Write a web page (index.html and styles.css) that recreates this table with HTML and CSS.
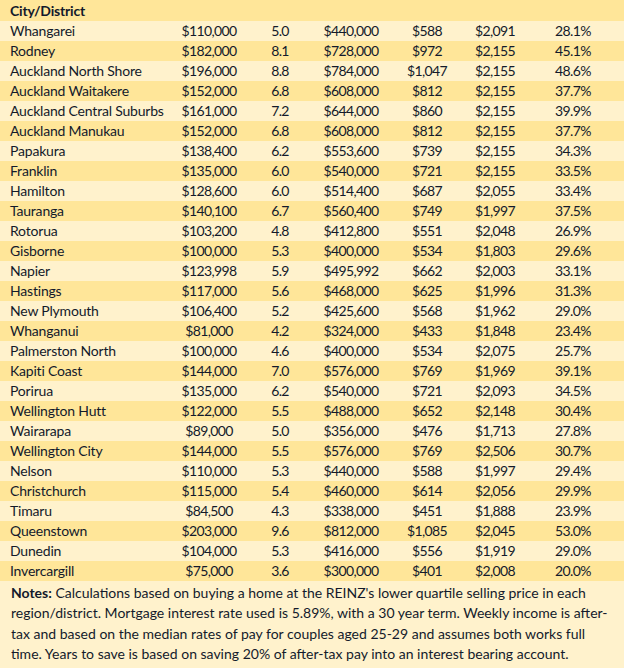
FILE: index.html
```html
<!DOCTYPE html>
<html>
<head>
<meta charset="utf-8">
<link rel="stylesheet" href="styles.css">
</head>
<body>
<table class="data">
<colgroup>
<col class="c1"><col class="c2"><col class="c3"><col class="c4"><col class="c5"><col class="c6"><col class="c7">
</colgroup>
<thead>
<tr class="head"><th>City/District</th><th></th><th></th><th></th><th></th><th></th><th></th></tr>
</thead>
<tbody>
<tr><td>Whangarei</td><td>$110,000</td><td>5.0</td><td>$440,000</td><td>$588</td><td>$2,091</td><td>28.1%</td></tr>
<tr><td>Rodney</td><td>$182,000</td><td>8.1</td><td>$728,000</td><td>$972</td><td>$2,155</td><td>45.1%</td></tr>
<tr><td>Auckland North Shore</td><td>$196,000</td><td>8.8</td><td>$784,000</td><td>$1,047</td><td>$2,155</td><td>48.6%</td></tr>
<tr><td>Auckland Waitakere</td><td>$152,000</td><td>6.8</td><td>$608,000</td><td>$812</td><td>$2,155</td><td>37.7%</td></tr>
<tr><td>Auckland Central Suburbs</td><td>$161,000</td><td>7.2</td><td>$644,000</td><td>$860</td><td>$2,155</td><td>39.9%</td></tr>
<tr><td>Auckland Manukau</td><td>$152,000</td><td>6.8</td><td>$608,000</td><td>$812</td><td>$2,155</td><td>37.7%</td></tr>
<tr><td>Papakura</td><td>$138,400</td><td>6.2</td><td>$553,600</td><td>$739</td><td>$2,155</td><td>34.3%</td></tr>
<tr><td>Franklin</td><td>$135,000</td><td>6.0</td><td>$540,000</td><td>$721</td><td>$2,155</td><td>33.5%</td></tr>
<tr><td>Hamilton</td><td>$128,600</td><td>6.0</td><td>$514,400</td><td>$687</td><td>$2,055</td><td>33.4%</td></tr>
<tr><td>Tauranga</td><td>$140,100</td><td>6.7</td><td>$560,400</td><td>$749</td><td>$1,997</td><td>37.5%</td></tr>
<tr><td>Rotorua</td><td>$103,200</td><td>4.8</td><td>$412,800</td><td>$551</td><td>$2,048</td><td>26.9%</td></tr>
<tr><td>Gisborne</td><td>$100,000</td><td>5.3</td><td>$400,000</td><td>$534</td><td>$1,803</td><td>29.6%</td></tr>
<tr><td>Napier</td><td>$123,998</td><td>5.9</td><td>$495,992</td><td>$662</td><td>$2,003</td><td>33.1%</td></tr>
<tr><td>Hastings</td><td>$117,000</td><td>5.6</td><td>$468,000</td><td>$625</td><td>$1,996</td><td>31.3%</td></tr>
<tr><td>New Plymouth</td><td>$106,400</td><td>5.2</td><td>$425,600</td><td>$568</td><td>$1,962</td><td>29.0%</td></tr>
<tr><td>Whanganui</td><td>$81,000</td><td>4.2</td><td>$324,000</td><td>$433</td><td>$1,848</td><td>23.4%</td></tr>
<tr><td>Palmerston North</td><td>$100,000</td><td>4.6</td><td>$400,000</td><td>$534</td><td>$2,075</td><td>25.7%</td></tr>
<tr><td>Kapiti Coast</td><td>$144,000</td><td>7.0</td><td>$576,000</td><td>$769</td><td>$1,969</td><td>39.1%</td></tr>
<tr><td>Porirua</td><td>$135,000</td><td>6.2</td><td>$540,000</td><td>$721</td><td>$2,093</td><td>34.5%</td></tr>
<tr><td>Wellington Hutt</td><td>$122,000</td><td>5.5</td><td>$488,000</td><td>$652</td><td>$2,148</td><td>30.4%</td></tr>
<tr><td>Wairarapa</td><td>$89,000</td><td>5.0</td><td>$356,000</td><td>$476</td><td>$1,713</td><td>27.8%</td></tr>
<tr><td>Wellington City</td><td>$144,000</td><td>5.5</td><td>$576,000</td><td>$769</td><td>$2,506</td><td>30.7%</td></tr>
<tr><td>Nelson</td><td>$110,000</td><td>5.3</td><td>$440,000</td><td>$588</td><td>$1,997</td><td>29.4%</td></tr>
<tr><td>Christchurch</td><td>$115,000</td><td>5.4</td><td>$460,000</td><td>$614</td><td>$2,056</td><td>29.9%</td></tr>
<tr><td>Timaru</td><td>$84,500</td><td>4.3</td><td>$338,000</td><td>$451</td><td>$1,888</td><td>23.9%</td></tr>
<tr><td>Queenstown</td><td>$203,000</td><td>9.6</td><td>$812,000</td><td>$1,085</td><td>$2,045</td><td>53.0%</td></tr>
<tr><td>Dunedin</td><td>$104,000</td><td>5.3</td><td>$416,000</td><td>$556</td><td>$1,919</td><td>29.0%</td></tr>
<tr><td>Invercargill</td><td>$75,000</td><td>3.6</td><td>$300,000</td><td>$401</td><td>$2,008</td><td>20.0%</td></tr>
</tbody>
</table>
<p class="notes"><b>Notes:</b> Calculations based on buying a home at the REINZ's lower quartile selling price in each region/district. Mortgage interest rate used is 5.89%, with a 30 year term. Weekly income is after-tax and based on the median rates of pay for couples aged 25-29 and assumes both works full time. Years to save is based on saving 20% of after-tax pay into an interest bearing account.</p>
</body>
</html>
```

FILE: styles.css
```css
html, body {
  margin: 0;
  padding: 0;
  background: #fff2cc;
}
body {
  width: 624px;
  height: 668px;
  overflow: hidden;
  font-family: Lato, "Liberation Sans", sans-serif;
  font-size: 14px;
  color: #131a2b;
}
.data {
  width: 624px;
  border-collapse: collapse;
  table-layout: fixed;
}
.c1 { width: 170px; }
.c2 { width: 78px; }
.c3 { width: 64px; }
.c4 { width: 78px; }
.c5 { width: 74px; }
.c6 { width: 62px; }
.c7 { width: 98px; }
.data th, .data td {
  padding: 0;
  height: 20px;
  line-height: 20px;
  text-align: center;
  white-space: nowrap;
  font-weight: normal;
  letter-spacing: -0.6px;
}
.data th:first-child, .data td:first-child {
  text-align: left;
  padding-left: 10px;
  letter-spacing: -0.2px;
}
.data td:last-child {
  padding-right: 4px;
}
.head th {
  height: 21px;
  font-weight: bold;
  background: #ffe699;
}
.data tbody tr:nth-child(even) td {
  background: #ffe699;
}
.data tbody tr:nth-child(odd) td {
  background: #fff2cc;
}
.notes {
  margin: 0;
  padding: 2px 8px 0 11px;
  line-height: 20.3px;
}
```
